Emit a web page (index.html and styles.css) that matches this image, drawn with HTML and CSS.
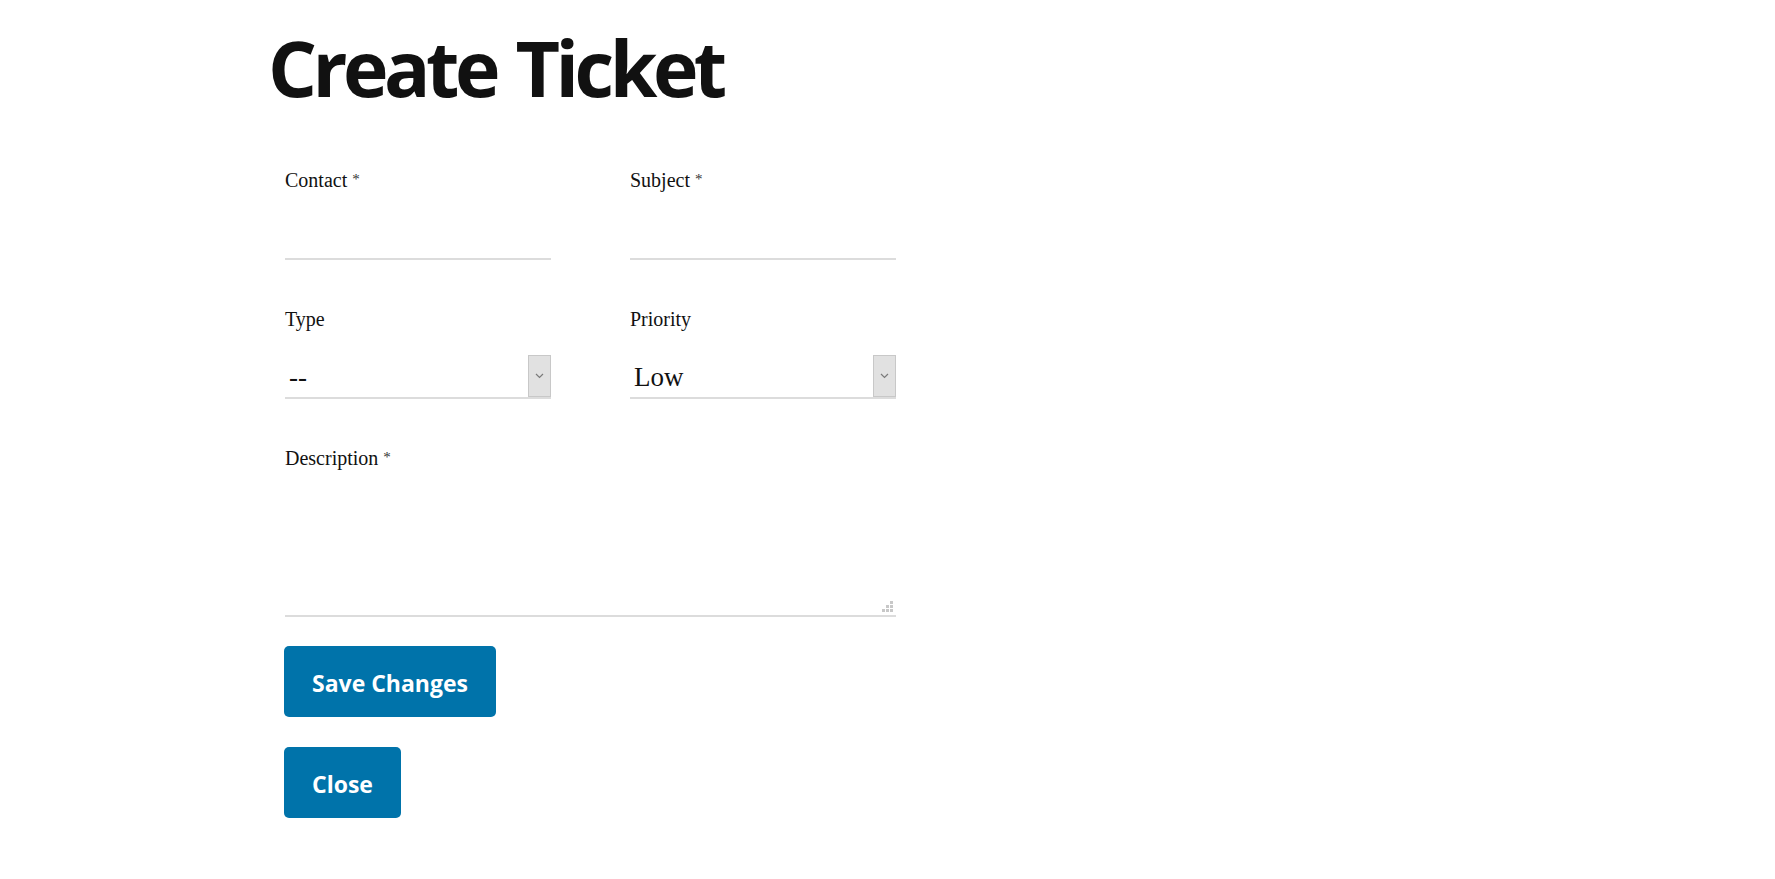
FILE: index.html
```html
<!DOCTYPE html>
<html lang="en">
<head>
<meta charset="utf-8">
<title>Create Ticket</title>
<link rel="stylesheet" href="styles.css">
</head>
<body>
<div class="page">
  <h1 class="title">Create Ticket</h1>
  <form class="form">
    <div class="grid">
      <div class="field">
        <label class="label">Contact <span class="req">*</span></label>
        <input class="line-input" type="text">
      </div>
      <div class="field">
        <label class="label">Subject <span class="req">*</span></label>
        <input class="line-input" type="text">
      </div>
      <div class="field">
        <label class="label">Type</label>
        <div class="select-wrap">
          <select class="line-select"><option>--</option></select>
          <span class="select-btn"><svg width="9" height="6" viewBox="0 0 9 6"><path d="M1 1 L4.5 4.5 L8 1" fill="none" stroke="#7a7a7a" stroke-width="1.2"/></svg></span>
        </div>
      </div>
      <div class="field">
        <label class="label">Priority</label>
        <div class="select-wrap">
          <select class="line-select"><option>Low</option></select>
          <span class="select-btn"><svg width="9" height="6" viewBox="0 0 9 6"><path d="M1 1 L4.5 4.5 L8 1" fill="none" stroke="#7a7a7a" stroke-width="1.2"/></svg></span>
        </div>
      </div>
      <div class="field wide">
        <label class="label">Description <span class="req">*</span></label>
        <div class="textarea-wrap">
          <textarea class="line-textarea"></textarea>
          <svg class="grip" width="11" height="11" viewBox="0 0 11 11">
            <rect x="8" y="0" width="3" height="3" fill="#c8c8c8"/>
            <rect x="4" y="4" width="3" height="3" fill="#c8c8c8"/>
            <rect x="8" y="4" width="3" height="3" fill="#c8c8c8"/>
            <rect x="0" y="8" width="3" height="3" fill="#c8c8c8"/>
            <rect x="4" y="8" width="3" height="3" fill="#c8c8c8"/>
            <rect x="8" y="8" width="3" height="3" fill="#c8c8c8"/>
          </svg>
        </div>
      </div>
    </div>
    <div class="actions">
      <button type="button" class="btn">Save Changes</button>
      <button type="button" class="btn">Close</button>
    </div>
  </form>
</div>
</body>
</html>
```

FILE: styles.css
```css
html, body {
  margin: 0;
  padding: 0;
  background: #ffffff;
}

body {
  font-family: "Liberation Serif", "Times New Roman", serif;
  color: #111111;
}

.page {
  padding: 29px 0 0 268px;
}

.title {
  margin: 0;
  font-family: "Open Sans", "Noto Sans", sans-serif;
  font-weight: 700;
  font-size: 77px;
  line-height: 77px;
  letter-spacing: -4.5px;
  word-spacing: 4px;
  color: #111111;
}

.form {
  margin: 63px 0 0 16px;
}

.grid {
  display: grid;
  grid-template-columns: 266px 266px;
  column-gap: 79px;
  row-gap: 48px;
  margin-left: 1px;
}

.field {
  display: flex;
  flex-direction: column;
  gap: 25px;
}

.field.wide {
  grid-column: 1 / -1;
}

.label {
  display: block;
  height: 22px;
  font-size: 20px;
  line-height: 22px;
  color: #111111;
}

.req {
  font-size: 15px;
  line-height: 0;
  vertical-align: 3px;
  color: #333333;
}

.line-input {
  box-sizing: border-box;
  display: block;
  width: 100%;
  height: 44px;
  margin: 0;
  padding: 0 4px;
  border: none;
  border-bottom: 2px solid #dcdcdc;
  background: transparent;
  font-family: "Liberation Serif", serif;
  font-size: 27px;
  outline: none;
}

.select-wrap {
  position: relative;
  height: 44px;
}

.line-select {
  box-sizing: border-box;
  display: block;
  width: 100%;
  height: 44px;
  margin: 0;
  padding: 2px 26px 0 4px;
  border: none;
  border-bottom: 2px solid #dcdcdc;
  border-radius: 0;
  background: transparent;
  -webkit-appearance: none;
  appearance: none;
  font-family: "Liberation Serif", serif;
  font-size: 27px;
  color: #111111;
  outline: none;
}

.select-btn {
  position: absolute;
  right: 0;
  top: 0;
  box-sizing: border-box;
  width: 23px;
  height: 42px;
  background: #e1e1e1;
  border: 1px solid #c8c8c8;
  display: flex;
  align-items: center;
  justify-content: center;
  pointer-events: none;
}

.textarea-wrap {
  position: relative;
  height: 123px;
}

.line-textarea {
  box-sizing: border-box;
  display: block;
  width: 100%;
  height: 123px;
  margin: 0;
  padding: 4px;
  border: none;
  border-bottom: 2px solid #dcdcdc;
  background: transparent;
  resize: none;
  font-family: "Liberation Serif", serif;
  font-size: 20px;
  outline: none;
}

.grip {
  position: absolute;
  right: 3px;
  bottom: 5px;
}

.actions {
  display: flex;
  flex-direction: column;
  align-items: flex-start;
  gap: 30px;
  margin-top: 29px;
}

.btn {
  box-sizing: border-box;
  margin: 0;
  padding: 24px 28px 20px;
  border: none;
  border-radius: 5px;
  background: #0073aa;
  color: #ffffff;
  font-family: "Open Sans", "Noto Sans", sans-serif;
  font-weight: 700;
  font-size: 23px;
  line-height: 27px;
  letter-spacing: 0;
  cursor: pointer;
}
```
